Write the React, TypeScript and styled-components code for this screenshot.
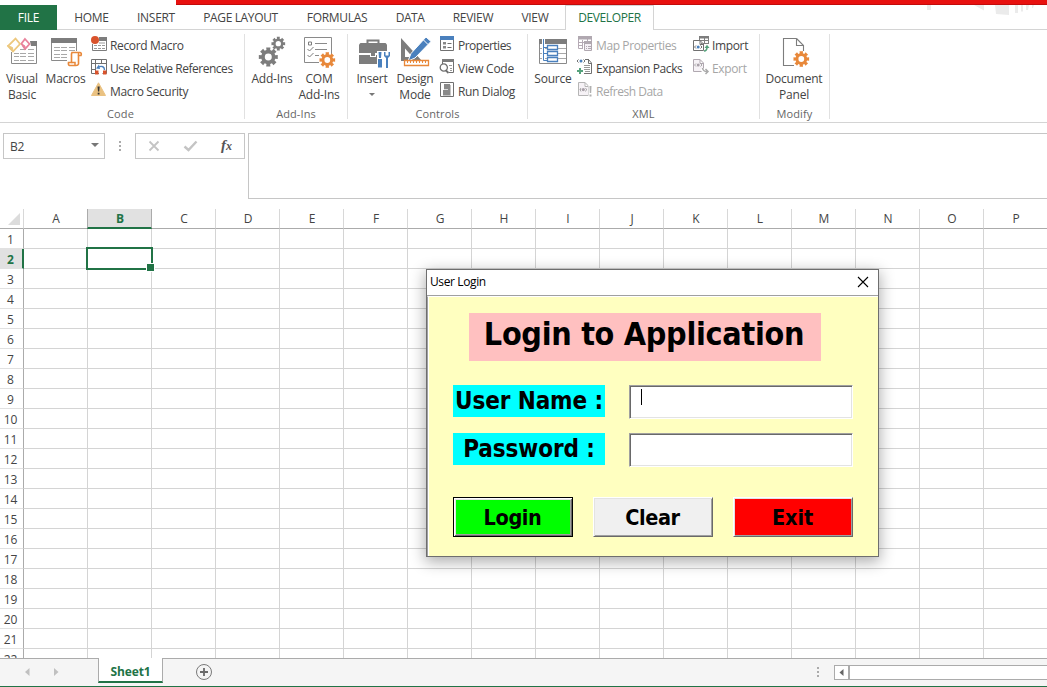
import React from 'react';
import styled, { createGlobalStyle, css } from 'styled-components';

const GREEN = '#217346';
const GREY = '#7d7d7d';
const ORANGE = '#e8883a';
const BLUE = '#4a80bd';

const GlobalStyle = createGlobalStyle`
  * { box-sizing: border-box; }
  body { margin: 0; background: #fff; overflow: hidden; }
  svg { display: block; flex: none; }
`;

const Window = styled.div`
  position: relative;
  display: flex;
  flex-direction: column;
  width: 1047px;
  height: 687px;
  overflow: hidden;
  background: #fff;
  color: #444;
  font: 12px/16px 'Open Sans', 'Noto Sans', sans-serif;
`;

/* ---------- title strip and tabs ---------- */

const TitleStrip = styled.div`
  flex: none;
  height: 5px;
  margin-left: 176px;
  background: #e8110f;
  border-bottom: 1px solid #c20b0b;
`;

const TabBar = styled.div`
  position: relative;
  flex: none;
  display: flex;
  height: 25px;
  border-bottom: 1px solid #d4d4d4;
`;

const Tab = styled.div<{ $w: number; $kind?: 'file' | 'active'; $ls?: number }>`
  flex: none;
  width: ${p => p.$w}px;
  height: 25px;
  line-height: 26px;
  text-align: center;
  white-space: nowrap;
  letter-spacing: ${p => p.$ls ?? -0.3}px;
  ${p => p.$kind === 'file' && css`background: ${GREEN}; color: #fff;`}
  ${p => p.$kind === 'active' && css`
    background: #fff;
    color: ${GREEN};
    border: 1px solid #d4d4d4;
    border-bottom: 0;
    line-height: 24px;
  `}
`;

const Watermark = styled.svg`
  position: absolute;
  top: 0;
  right: 0;
`;

/* ---------- ribbon ---------- */

const Ribbon = styled.div`
  flex: none;
  display: flex;
  height: 93px;
  border-bottom: 1px solid #d4d4d4;
`;

const Group = styled.div<{ $w: number }>`
  flex: none;
  display: flex;
  flex-direction: column;
  width: ${p => p.$w}px;
  height: 85px;
  margin-top: 4px;
  border-right: 1px solid #e1e1e1;
`;

const GroupBody = styled.div`
  flex: none;
  display: flex;
  height: 72px;
`;

const Caption = styled.div<{ $shift?: number }>`
  flex: none;
  padding-right: ${p => p.$shift ?? 0}px;
  color: #666;
  text-align: center;
  font-size: 11px;
  line-height: 16px;
  letter-spacing: 0.1px;
`;

const BigButton = styled.div<{ $w: number; $ls?: number }>`
  flex: none;
  display: flex;
  flex-direction: column;
  align-items: center;
  width: ${p => p.$w}px;
  padding-top: 2px;
  white-space: nowrap;
  text-align: center;
  letter-spacing: ${p => p.$ls ?? -0.2}px;
  & > svg { margin-bottom: 3px; overflow: visible; }
`;

const DropArrow = styled.i`
  margin-top: 6px;
  border: 3px solid transparent;
  border-top-color: #777;
  border-bottom: 0;
`;

const SmallColumn = styled.div<{ $ml?: number; $w?: number }>`
  flex: none;
  width: ${p => (p.$w ? p.$w + 'px' : 'auto')};
  margin-left: ${p => p.$ml ?? 0}px;
  margin-top: -1px;
`;

const SmallButton = styled.div<{ $off?: boolean; $ls?: number; $gap?: number }>`
  display: flex;
  gap: ${p => p.$gap ?? 3}px;
  height: 23px;
  line-height: 25px;
  white-space: nowrap;
  letter-spacing: ${p => p.$ls ?? -0.35}px;
  color: ${p => (p.$off ? '#a6a6a6' : '#444')};
  & > svg { margin-top: 3px; overflow: visible; }
`;

/* ---------- formula bar ---------- */

const FormulaRow = styled.div`
  flex: none;
  display: flex;
  align-items: flex-start;
  height: 86px;
  padding: 10px 0 0 3px;
`;

const NameBox = styled.div`
  display: flex;
  align-items: center;
  justify-content: space-between;
  width: 102px;
  height: 26px;
  padding: 1px 5px 0 6px;
  border: 1px solid #c6c6c6;
  letter-spacing: -0.2px;
`;

const DownArrow = styled.i`
  margin-top: -3px;
  border: 4px solid transparent;
  border-top-color: #777;
  border-bottom: 0;
`;

const Dots = styled.div<{ $m: string }>`
  display: flex;
  flex-direction: column;
  gap: 2px;
  margin: ${p => p.$m};
  & > i { width: 2px; height: 2px; background: #ababab; }
`;

const FormulaTools = styled.div`
  display: flex;
  width: 110px;
  height: 26px;
  border: 1px solid #c6c6c6;
`;

const FormulaInput = styled.div`
  flex: 1;
  height: 66px;
  margin-left: 3px;
  border: 1px solid #c6c6c6;
  border-right: 0;
`;

/* ---------- sheet ---------- */

const Sheet = styled.div`
  flex: 1;
  min-height: 0;
  overflow: hidden;
`;

const HeaderRow = styled.div`
  display: flex;
  height: 20px;
`;

const Corner = styled.div`
  flex: none;
  display: flex;
  justify-content: flex-end;
  width: 24px;
  height: 20px;
  padding: 4px 3px 0 0;
  border-right: 1px solid #d8d8d8;
  border-bottom: 1px solid #ababab;
`;

const ColHead = styled.div<{ $on?: boolean }>`
  flex: none;
  width: 64px;
  height: 20px;
  padding-left: 1px;
  text-align: center;
  line-height: 20px;
  border-right: 1px solid #d8d8d8;
  border-bottom: 1px solid #ababab;
  ${p => p.$on && css`
    width: 65px;
    margin-left: -1px;
    background: #e1e1e1;
    border-left: 1px solid #ababab;
    border-right-color: #ababab;
    border-bottom: 2px solid ${GREEN};
    color: ${GREEN};
    font-weight: 700;
  `}
`;

const Row = styled.div`
  display: flex;
  height: 20px;
`;

const RowHead = styled.div<{ $on?: boolean }>`
  flex: none;
  width: 24px;
  height: 20px;
  padding-right: 2px;
  text-align: center;
  line-height: 21px;
  border-right: 1px solid #ababab;
  border-bottom: 1px solid #e1e1e1;
  ${p => p.$on && css`
    padding-right: 1px;
    background: #e1e1e1;
    border-right: 2px solid ${GREEN};
    color: ${GREEN};
    font-weight: 700;
  `}
`;

const Cell = styled.div`
  position: relative;
  flex: none;
  width: 64px;
  height: 20px;
  border-right: 1px solid #d4d4d4;
  border-bottom: 1px solid #d4d4d4;
`;

const Selection = styled.div`
  position: absolute;
  z-index: 1;
  left: -2px;
  top: -2px;
  width: 67px;
  height: 23px;
  border: 2px solid ${GREEN};
  &::after {
    content: '';
    position: absolute;
    right: -4px;
    bottom: -4px;
    width: 7px;
    height: 7px;
    background: ${GREEN};
    border: 1px solid #fff;
  }
`;

/* ---------- sheet tabs ---------- */

const BottomBar = styled.div`
  flex: none;
  display: flex;
  height: 29px;
  background: #f5f5f5;
  border-top: 1px solid #ababab;
  border-bottom: 1px solid ${GREEN};
`;

const SheetNav = styled.div`
  display: flex;
  width: 98px;
  padding: 9px 0 0 24px;
  gap: 22px;
`;

const SheetTab = styled.div`
  width: 65px;
  height: 25px;
  margin-top: -1px;
  background: #fff;
  border: 1px solid #ababab;
  border-top: 0;
  border-bottom: 2px solid ${GREEN};
  color: ${GREEN};
  font-weight: 700;
  line-height: 27px;
  text-align: center;
  letter-spacing: -0.1px;
`;

const AddSheet = styled.svg`
  margin: 4px 0 0 32px;
`;

const ScrollTrack = styled.div`
  flex: 1;
  display: flex;
  height: 15px;
  margin-top: 6px;
  background: #fff;
  border: 1px solid #ababab;
  border-right: 0;
`;

const ScrollButton = styled.div`
  width: 15px;
  height: 13px;
  padding: 3px 0 0 4px;
  border-right: 2px solid #ababab;
`;

/* ---------- dialog ---------- */

const Dialog = styled.div`
  position: absolute;
  z-index: 2;
  left: 426px;
  top: 269px;
  width: 453px;
  height: 288px;
  border: 1px solid #6e6e6e;
  background: #ffffc0;
  box-shadow: 0 4px 14px 1px rgba(0, 0, 0, 0.32);
  color: #000;
`;

const DialogTitle = styled.div`
  display: flex;
  align-items: center;
  justify-content: space-between;
  height: 26px;
  padding: 0 9px 1px 3px;
  background: #fff;
  border-bottom: 1px solid #a0a0a0;
  letter-spacing: -0.38px;
`;

const DialogBody = styled.div`
  height: 260px;
  padding: 16px 25px 0 24px;
  border-top: 1px solid #fff;
  border-left: 1px solid #a0a0a0;
  box-shadow: inset 1px 0 0 #fff;
  font-family: 'DejaVu Sans', sans-serif;
  font-stretch: condensed;
  font-weight: 700;
`;

const Heading = styled.div`
  width: 352px;
  height: 48px;
  margin: 0 0 24px 17px;
  padding-right: 2px;
  background: #ffc0c0;
  font-size: 32px;
  line-height: 42px;
  text-align: center;
  white-space: nowrap;
  letter-spacing: -0.3px;
`;

const Field = styled.div`
  display: flex;
  justify-content: space-between;
  height: 48px;
  margin-left: 1px;
`;

const FieldLabel = styled.div`
  width: 152px;
  height: 32px;
  background: #0ff;
  font-size: 24px;
  line-height: 33px;
  text-align: center;
  white-space: nowrap;
  letter-spacing: -0.1px;
`;

const TextField = styled.div`
  width: 224px;
  height: 34px;
  padding: 3px 0 0 10px;
  background: #fff;
  border: 1px solid;
  border-color: #a0a0a0 #fff #fff #a0a0a0;
  box-shadow: inset 1px 1px 0 #696969, inset -1px -1px 0 #e3e3e3;
`;

const Caret = styled.i`
  display: block;
  width: 1px;
  height: 16px;
  margin-left: 1px;
  background: #000;
`;

const Buttons = styled.div`
  display: flex;
  gap: 20px;
  margin: 16px 0 0 1px;
`;

const DialogButton = styled.div<{ $bg: string; $default?: boolean; $ls?: number }>`
  width: 120px;
  height: 40px;
  padding-right: 1px;
  background: ${p => p.$bg};
  font-size: 21.5px;
  text-align: center;
  line-height: 40px;
  letter-spacing: ${p => p.$ls ?? -0.1}px;
  border: 1px solid;
  border-color: #fff #696969 #696969 #fff;
  box-shadow: inset 1px 1px 0 #e3e3e3, inset -1px -1px 0 #a0a0a0;
  ${p => p.$default && css`
    border-color: #000;
    box-shadow: inset 1px 1px 0 #fff, inset -1px -1px 0 #696969,
      inset 2px 2px 0 #e3e3e3, inset -2px -2px 0 #a0a0a0;
  `}
`;

/* ---------- icons ---------- */

type GearProps = { cx: number; cy: number; r: number; fill: string; hole?: number };

function Gear({ cx, cy, r, fill, hole = 0.36 }: GearProps) {
  const inner = r * 0.74;
  const pts: string[] = [];
  for (let i = 0; i < 8; i++) {
    const a = (i * Math.PI) / 4;
    ([[-0.26, inner], [-0.22, r], [0.22, r], [0.26, inner]] as const).forEach(([d, q]) =>
      pts.push(`${(cx + q * Math.cos(a + d)).toFixed(2)} ${(cy + q * Math.sin(a + d)).toFixed(2)}`));
  }
  const h = r * hole;
  return (
    <path
      fillRule="evenodd"
      fill={fill}
      d={`M${pts.join('L')}ZM${cx - h} ${cy}a${h} ${h} 0 1 0 ${2 * h} 0a${h} ${h} 0 1 0 ${-2 * h} 0Z`}
    />
  );
}

const Big = ({ children }: { children: React.ReactNode }) => (
  <svg width="32" height="32" viewBox="0 0 32 32" fill="none">{children}</svg>
);
const Small = ({ children }: { children: React.ReactNode }) => (
  <svg width="16" height="16" viewBox="0 0 16 16" fill="none">{children}</svg>
);

const VisualBasicIcon = () => (
  <Big>
    <path d="M5.5 16V27.5H30.5V9" stroke="#8a8a8a" />
    <path d="M24 5H31V10H25Z" fill={GREY} />
    <path d="M8 17.5h5m1 0h6m2 0h6M8 20.5h5m1 0h6m2 0h6M8 24.5h5m1 0h6m2 0h6M14 13.5h6m2 0h6" stroke="#a8a8a8" />
    <path d="M9.5 2.500L14 8L7 15.500L2 10Z" fill="#fff" stroke="#edc87e" strokeWidth="1.8" />
    <path d="M1.500 9.500L7 15.500L6.500 11.500Z" fill="#edc87e" stroke="#edc87e" />
    <path d="M19 3L23.500 8L19 13L15.500 7.500Z" fill="#fff" stroke="#e8829c" strokeWidth="1.8" />
    <path d="M15.500 8L19 13V10Z" fill="#e8829c" stroke="#e8829c" />
  </Big>
);

const MacrosIcon = () => (
  <Big>
    <path d="M1.500 3V24.500H17M26.500 3V15" stroke="#8a8a8a" />
    <path d="M1 2H27V7H1Z" fill={GREY} />
    <path d="M4 11.500h6m1 0h6m2 0h6M4 14.500h6m1 0h6m2 0h6M4 18.500h6m1 0h6M4 21.500h6m1 0h6" stroke="#a8a8a8" />
    <path d="M22 16.500H30Q32 17 31 19.500H28.500V28Q28 29.500 26 29.500H19.500Q18 29 18.500 26.500H21.500V18Z" fill="#fff" stroke={ORANGE} strokeWidth="1.600" />
    <path d="M28.500 19.500V17M21.500 26.500H25V29" stroke={ORANGE} strokeWidth="1.500" />
  </Big>
);

const AddInsIcon = () => (
  <Big>
    <Gear cx={12.300} cy={21} r={9.700} fill={GREY} />
    <Gear cx={22.300} cy={7.700} r={7} fill={GREY} hole={0.38} />
  </Big>
);

const ComIcon = () => (
  <Big>
    <path d="M1.500 1.500H28.500V18M1.500 1.500V26.500H16" stroke="#8a8a8a" />
    <path d="M12 7.500H24M12 13.500H24M12 19.500H16" stroke="#8a8a8a" />
    <path d="M5.500 6h3v3h-3zM4.500 13l2 2 4-4M4.500 19l2 2 4-4" stroke={GREY} />
    <Gear cx={24.300} cy={24} r={8} fill={ORANGE} />
  </Big>
);

const InsertIcon = () => (
  <Big>
    <path d="M11.500 8V4.500H22.500V8" stroke={GREY} strokeWidth="2" />
    <path d="M4.500 7H29.500L31 8.500V17H3V8.500Z" fill={GREY} />
    <path d="M3 19H14V21H20V19H31V28H3Z" fill={GREY} />
    <path d="M15 17h4v3h-4z" fill={GREY} />
    <path d="M21 15H34V32H21Z" fill="#fff" />
    <path d="M22.500 16H25.500L25 22H23ZM22 23H26V31.500H22Z" fill={BLUE} />
    <path d="M28 16V20L30 22V32H32V22L34 20V16H32.500V19.500H29.500V16Z" fill={BLUE} />
  </Big>
);

const DesignIcon = () => (
  <Big>
    <path fillRule="evenodd" d="M2 2L23 25H2ZM6 12.500V21H13.500Z" fill={GREY} />
    <path d="M27 1L32 5.500L16 22L9 25L12 17.500Z" fill={BLUE} stroke="#fff" strokeWidth="1" />
    <path d="M24 3.500l5 5" stroke="#fff" />
    <path d="M5.500 24.500H29.500V29.500H5.500Z" fill="#fff" stroke={ORANGE} strokeWidth="1.300" />
    <path d="M8.500 25v2m3-2v2m3-2v2m3-2v2m3-2v2m3-2v2m3-2v2" stroke={ORANGE} />
  </Big>
);

const SourceIcon = () => (
  <Big>
    <path d="M2.500 3V27.500H29.500V3" stroke="#8a8a8a" />
    <path d="M2 3H30V8H2Z" fill={GREY} />
    <path d="M3 12.500h26M3 17.500h26M3 22.500h26" stroke="#a8a8a8" />
    <path d="M6.500 3V25.500H11" stroke="#fff" strokeWidth="3" />
    <path d="M6.500 3V24.500H11M6.500 11.500H11M6.500 17.500H11" stroke={BLUE} />
    <path d="M10.500 9.500h10v4h-10zM10.500 15.500h10v4h-10zM10.500 21.500h10v4h-10z" fill="#fff" stroke={BLUE} strokeWidth="1.300" />
  </Big>
);

const DocumentIcon = () => (
  <Big>
    <path d="M18.500 2.500H5.500V29.500H16M18.500 2.500L25.500 9.500V15M18.500 2.500V9.500H25.500" stroke="#7d7d7d" strokeWidth="1.100" />
    <Gear cx={23.300} cy={23} r={8} fill={ORANGE} />
  </Big>
);

const RecordIcon = () => (
  <Small>
    <path d="M1.500 8V14.500H15.500V2" stroke="#7d7d7d" />
    <path d="M8 1H16V5H8Z" fill={GREY} />
    <path d="M3 9.500h3m1 0h3m1 0h3M3 12.500h3m1 0h3m1 0h3M8 7h6" stroke="#999" />
    <circle cx="4" cy="4" r="4" fill="#d9532c" />
  </Small>
);

const RelativeIcon = () => (
  <Small>
    <path d="M.500.500H15.500V14.500H.500ZM0 4.500H16M4.500 0V15M10.500 0V4M0 10.500H4" stroke="#707070" />
    <path d="M5 5h10v6H5z" fill="#fff" />
    <path d="M13.500 11Q13.500 6 7 8" stroke={BLUE} strokeWidth="1.400" />
    <path d="M5 9.500L8 5.500L9 10Z" fill={BLUE} />
    <path d="M4 11.500h3.500v4H4zM12 11.500h3.500v4H12z" fill="#d9532c" />
    <path d="M8 12h3.500v3.500H8z" fill="#fff" />
  </Small>
);

const SecurityIcon = () => (
  <Small>
    <path d="M7.500.800L14.500 13.500H.500Z" fill="#eac282" stroke="#eac282" strokeLinejoin="round" />
    <path d="M6.500 4.500h2.200l-.5 5h-1.200zM6.700 10.800h1.800v1.800h-1.800z" fill="#333" />
  </Small>
);

const PropertiesIcon = () => (
  <Small>
    <path d="M.500.500h13v14H.500z" fill="#fff" stroke="#707070" />
    <path d="M0 0h14v4H0z" fill={BLUE} />
    <path d="M7.500 7.500h4M7.500 11.500h4" stroke="#707070" />
    <path d="M3 6h3v2.500H3zM3 10h3v2.500H3z" fill="#888" />
  </Small>
);

const ViewCodeIcon = () => (
  <Small>
    <path d="M2.500 5V1M13.500 1V13.500H9" stroke="#707070" />
    <path d="M2 0h12v3H2z" fill={GREY} />
    <path d="M9 6.500h3M10 9.500h2M10 11.500h2" stroke="#999" />
    <circle cx="3.800" cy="8.500" r="3.600" stroke="#707070" strokeWidth="1.300" />
    <path d="M5.500 11l3 3" stroke="#707070" strokeWidth="1.800" />
  </Small>
);

const RunDialogIcon = () => (
  <Small>
    <path d="M.500.500h13v14H.500z" fill="#fff" stroke="#707070" />
    <path d="M4 2h6v11H3V8h1z" fill="#8a8a8a" />
    <path d="M4 7.500h4" stroke="#ddd" />
    <path d="M10.500 3v10.500H3" stroke="#c4c4c4" />
  </Small>
);

const MapIcon = () => (
  <Small>
    <path d="M1.500 2V12.500H6M14.500 3V5M5.500 4V12M10.500 3V6M1 6.500H7M1 9.500H6" stroke="#b5aab5" />
    <path d="M1 0h14v3.500H1z" fill="#b0a8b0" />
    <path d="M7.500 6.500h7v8h-7z" fill="#f4eff5" stroke="#b0a8b0" />
    <path d="M7 5h8v3H7z" fill="#b0a8b0" />
    <path d="M9 10.500h1m1 0h3M9 12.500h1m1 0h3" stroke="#b0a8b0" />
  </Small>
);

const ExpansionIcon = () => (
  <Small>
    <path d="M5.500 4V.500H11.500L14.500 4V14.500H7M11.500 0V4.500H15" stroke="#707070" />
    <path d="M7 6.500h6M7 8.500h6M7 10.500h6M8 12.500h5" stroke="#999" />
    <path d="M0 0h8v4H0z" fill="#fff" />
    <path d="M0 2l1.500-1.500M0 2l1.500 1.500M8 2L6.500.500M8 2L6.500 3.500" stroke="#707070" />
    <circle cx="4" cy="2" r="1.500" fill={BLUE} />
    <path d="M3 9v6M0 12h6" stroke="#55a27c" strokeWidth="2" />
  </Small>
);

const RefreshIcon = () => (
  <Small>
    <path d="M1.500.500H8L11.500 4V13.500H1.500ZM8 .500V4.500H11" fill="#f6f2f6" stroke="#b5b5b5" />
    <path d="M3 7.500h1m5 0h1M4 9.500l-1-2 1-1.500M8.500 6l1 1.500-1 2" stroke="#aaa" />
    <circle cx="6.300" cy="7.600" r="1.600" fill="#a8a0a8" />
    <path d="M11.500 3h3.500v12h-3.500z" fill="#fff" />
    <path d="M12.500 4H14.500L14.200 11h-1.400zM12.500 12.500h2v2h-2z" fill="#b0b0b0" />
  </Small>
);

const ImportIcon = () => (
  <Small>
    <path d="M6.500 4V1M6 .500h10M15.500 0V8M11.500 2V8M7 4.500h9M8 7.500h8" stroke="#808080" />
    <path d="M6 0h10v2.500H6z" fill={GREY} />
    <path d="M.500 4.500H7L10.500 8V14.500H.500ZM7 4.500V8.500H10" fill="#fff" stroke="#707070" />
    <path d="M3 9.500L1.500 11 3 12.500M7.500 9.500L9 11 7.500 12.500" stroke="#707070" />
    <circle cx="5.200" cy="11" r="1.500" fill={BLUE} />
    <path d="M11 15Q14 15 14 11" stroke="#55a27c" strokeWidth="1.600" />
    <path d="M11.500 12L14 8.800L16.500 12Z" fill="#55a27c" />
  </Small>
);

const ExportIcon = () => (
  <Small>
    <path d="M.500.500H7L10.500 4V12.500H.500ZM7 .500V4.500H10" fill="#f6f2f6" stroke="#b0a8b0" />
    <path d="M3 4.500L1.500 6 3 7.500M7.500 4.500L9 6 7.500 7.500" stroke="#aaa" />
    <circle cx="5.200" cy="6" r="1.500" fill="#a8a0a8" />
    <path d="M9.500 9.500Q10 13 14 12.500" stroke="#fff" strokeWidth="4" />
    <path d="M9.500 9Q10 12.500 14 12.500M12.500 10l2.500 2.500-2.500 2.500" stroke="#aaa" strokeWidth="1.500" />
  </Small>
);

/* ---------- page ---------- */

const COLUMNS = 'ABCDEFGHIJKLMNOP'.split('');
const ROWS = Array.from({ length: 22 }, (_, i) => i + 1);

const ThreeDots = ({ m }: { m: string }) => <Dots $m={m}><i /><i /><i /></Dots>;

function RibbonGroups() {
  return (
    <Ribbon>
      <Group $w={245}>
        <GroupBody>
          <BigButton $w={44}><VisualBasicIcon />Visual<br />Basic</BigButton>
          <BigButton $w={43}><MacrosIcon />Macros</BigButton>
          <SmallColumn $ml={4}>
            <SmallButton><RecordIcon />Record Macro</SmallButton>
            <SmallButton $ls={-0.47}><RelativeIcon />Use Relative References</SmallButton>
            <SmallButton><SecurityIcon />Macro Security</SmallButton>
          </SmallColumn>
        </GroupBody>
        <Caption $shift={3}>Code</Caption>
      </Group>
      <Group $w={103}>
        <GroupBody>
          <BigButton $w={54}><AddInsIcon />Add-Ins</BigButton>
          <BigButton $w={40}><ComIcon />COM<br />Add-Ins</BigButton>
        </GroupBody>
        <Caption>Add-Ins</Caption>
      </Group>
      <Group $w={180}>
        <GroupBody>
          <BigButton $w={48}><InsertIcon />Insert<DropArrow /></BigButton>
          <BigButton $w={38}><DesignIcon />Design<br />Mode</BigButton>
          <SmallColumn $ml={6}>
            <SmallButton $gap={2} $ls={-0.5}><PropertiesIcon />Properties</SmallButton>
            <SmallButton $gap={2} $ls={-0.25}><ViewCodeIcon />View Code</SmallButton>
            <SmallButton $gap={2}><RunDialogIcon />Run Dialog</SmallButton>
          </SmallColumn>
        </GroupBody>
        <Caption>Controls</Caption>
      </Group>
      <Group $w={232}>
        <GroupBody>
          <BigButton $w={50}><SourceIcon />Source</BigButton>
          <SmallColumn $ml={-1} $w={116}>
            <SmallButton $ls={-0.4} $off><MapIcon />Map Properties</SmallButton>
            <SmallButton $ls={-0.4}><ExpansionIcon />Expansion Packs</SmallButton>
            <SmallButton $ls={-0.48} $off><RefreshIcon />Refresh Data</SmallButton>
          </SmallColumn>
          <SmallColumn>
            <SmallButton><ImportIcon />Import</SmallButton>
            <SmallButton $off><ExportIcon />Export</SmallButton>
          </SmallColumn>
        </GroupBody>
        <Caption>XML</Caption>
      </Group>
      <Group $w={70}>
        <GroupBody>
          <BigButton $w={68}><DocumentIcon />Document<br />Panel</BigButton>
        </GroupBody>
        <Caption>Modify</Caption>
      </Group>
    </Ribbon>
  );
}

function LoginDialog() {
  return (
    <Dialog>
      <DialogTitle>
        User Login
        <svg width="12" height="12" viewBox="0 0 12 12">
          <path d="M1 1L11 11M11 1L1 11" stroke="#000" strokeWidth="1.100" />
        </svg>
      </DialogTitle>
      <DialogBody>
        <Heading>Login to Application</Heading>
        <Field>
          <FieldLabel>User Name :</FieldLabel>
          <TextField><Caret /></TextField>
        </Field>
        <Field>
          <FieldLabel>Password :</FieldLabel>
          <TextField />
        </Field>
        <Buttons>
          <DialogButton $bg="#00ff00" $ls={-0.4} $default>Login</DialogButton>
          <DialogButton $bg="#f0f0f0" $ls={-0.4}>Clear</DialogButton>
          <DialogButton $bg="#ff0000">Exit</DialogButton>
        </Buttons>
      </DialogBody>
    </Dialog>
  );
}

export default function App() {
  return (
    <Window>
      <GlobalStyle />
      <TitleStrip />
      <TabBar>
        <Tab $w={57} $kind="file">FILE</Tab>
        <Tab $w={69}>HOME</Tab>
        <Tab $w={60}>INSERT</Tab>
        <Tab $w={109} $ls={-0.36}>PAGE LAYOUT</Tab>
        <Tab $w={84}>FORMULAS</Tab>
        <Tab $w={62} $ls={-0.5}>DATA</Tab>
        <Tab $w={64}>REVIEW</Tab>
        <Tab $w={60}>VIEW</Tab>
        <Tab $w={89} $ls={-0.4} $kind="active">DEVELOPER</Tab>
        <Watermark width="122" height="12" viewBox="0 0 122 12">
          <path d="M2 0h4v5H2zM49 0h10v5.500zM70 0h14v10L71 9zM90 0h3v8h-3zM96 0h2v6.500h-2zM101 0h3l-1 5h-2zM107 0h2l-1 3h-1z" fill="#ebebeb" />
        </Watermark>
      </TabBar>
      <RibbonGroups />
      <FormulaRow>
        <NameBox>B2<DownArrow /></NameBox>
        <ThreeDots m="8px 14px 0 14px" />
        <FormulaTools>
          <svg width="108" height="24" viewBox="0 0 108 24" fill="none">
            <path d="M13.500 7.500L22.500 16.500M22.500 7.500L13.500 16.500" stroke="#c4c4c4" strokeWidth="1.800" />
            <path d="M48.500 12.500L52.500 16L60.500 7.500" stroke="#c4c4c4" strokeWidth="2.400" />
            <text x="85" y="16" fill="#555" fontFamily="Liberation Serif, serif" fontStyle="italic" fontWeight="700" fontSize="15">f</text>
            <text x="90" y="16" fill="#555" fontFamily="Liberation Serif, serif" fontStyle="italic" fontWeight="700" fontSize="12">x</text>
          </svg>
        </FormulaTools>
        <FormulaInput />
      </FormulaRow>
      <Sheet>
        <HeaderRow>
          <Corner>
            <svg width="12" height="12" viewBox="0 0 12 12"><path d="M12 0V12H0Z" fill="#dcdcdc" /></svg>
          </Corner>
          {COLUMNS.map(c => <ColHead key={c} $on={c === 'B'}>{c}</ColHead>)}
        </HeaderRow>
        {ROWS.map(r => (
          <Row key={r}>
            <RowHead $on={r === 2}>{r}</RowHead>
            {COLUMNS.map(c => (
              <Cell key={c}>{r === 2 && c === 'B' && <Selection />}</Cell>
            ))}
          </Row>
        ))}
      </Sheet>
      <BottomBar>
        <SheetNav>
          <svg width="7" height="8" viewBox="0 0 7 8"><path d="M5.500 0V8L1 4Z" fill="#c0c0c0" /></svg>
          <svg width="7" height="8" viewBox="0 0 7 8"><path d="M1 0V8L5.500 4Z" fill="#c0c0c0" /></svg>
        </SheetNav>
        <SheetTab>Sheet1</SheetTab>
        <AddSheet width="18" height="18" viewBox="0 0 18 18" fill="none">
          <circle cx="9" cy="9" r="7.500" stroke="#7a7a7a" />
          <path d="M9 5V13M5 9H13" stroke="#6a6a6a" strokeWidth="1.800" />
        </AddSheet>
        <ThreeDots m="8px 15px 0 604px" />
        <ScrollTrack>
          <ScrollButton>
            <svg width="5" height="7" viewBox="0 0 5 7"><path d="M4.500 0V7L.500 3.500Z" fill="#666" /></svg>
          </ScrollButton>
        </ScrollTrack>
      </BottomBar>
      <LoginDialog />
    </Window>
  );
}
